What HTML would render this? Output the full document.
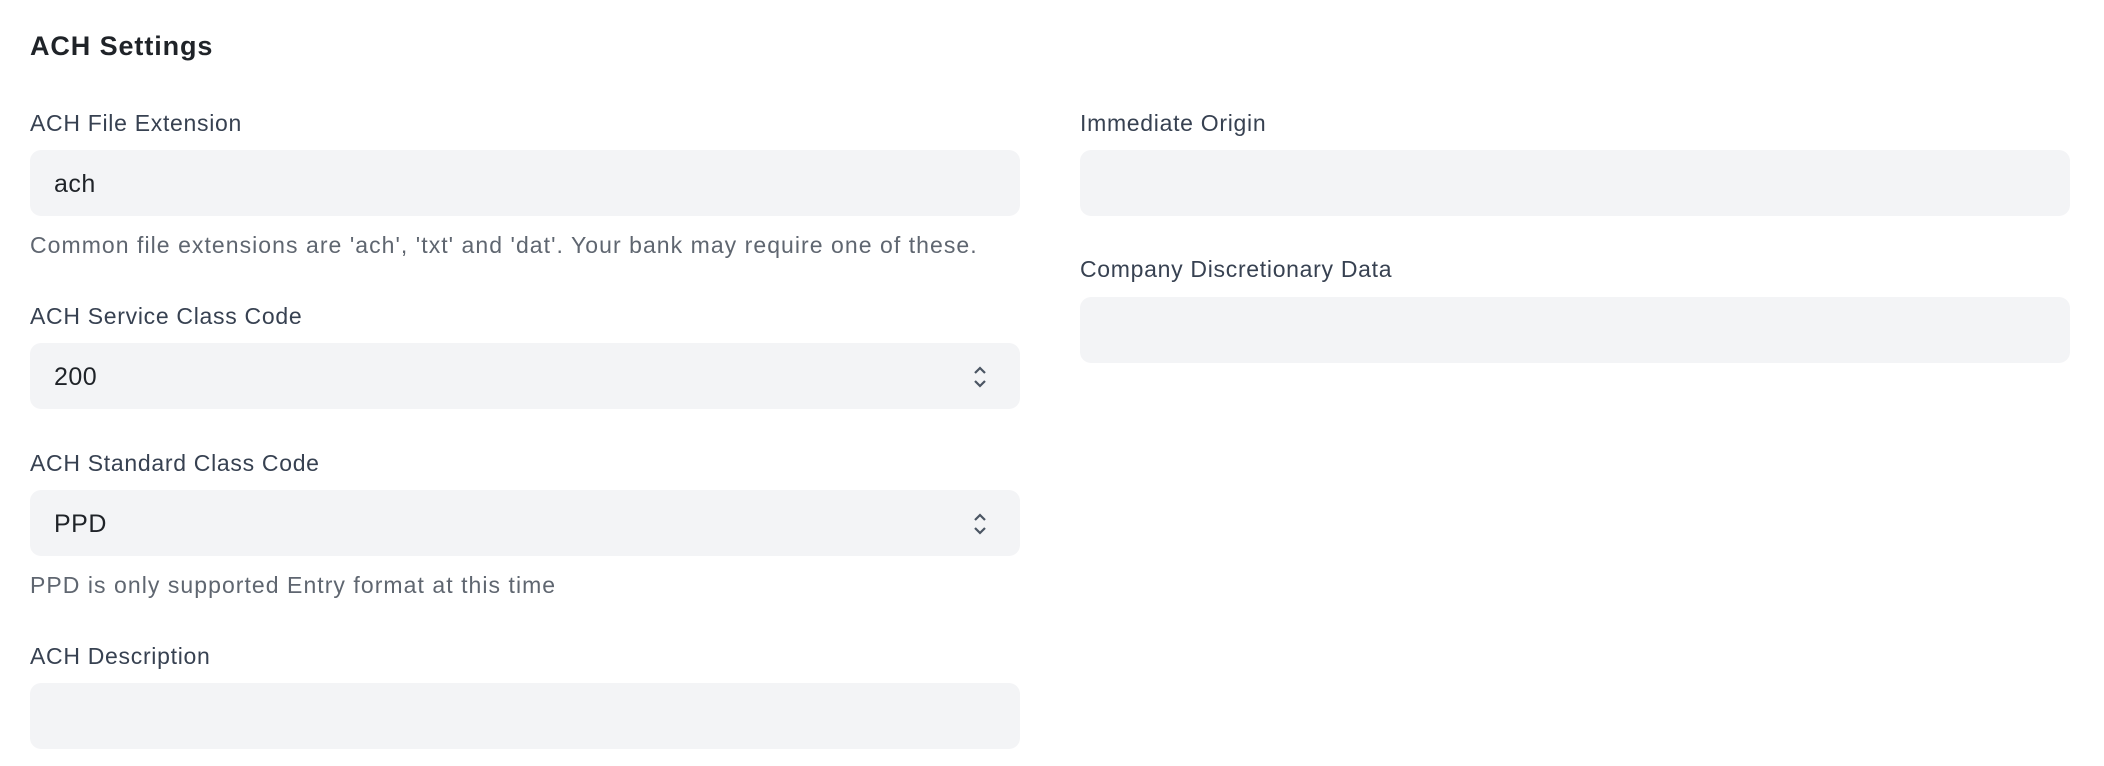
<!DOCTYPE html>
<html><head><meta charset="utf-8"><style>
html,body{margin:0;padding:0;background:#fff;width:2104px;height:766px;overflow:hidden;font-family:"Liberation Sans",sans-serif;}
.a{position:absolute;white-space:nowrap;}
.t{left:30px;top:30px;font-size:27px;font-weight:bold;color:#1f2328;line-height:32px;letter-spacing:0.9px;}
.l{font-size:23px;color:#374151;line-height:28px;letter-spacing:0.7px;}
.h{font-size:23px;color:#5f6670;line-height:28px;letter-spacing:1.05px;}
.i{background:#f3f4f6;border-radius:11px;height:66px;}
.v{font-size:25px;color:#1f2328;line-height:68px;padding-left:24px;letter-spacing:0.5px;}
.c{position:absolute;right:32px;top:22px;}
</style></head><body>
<div class="a t">ACH Settings</div>

<div class="a l" style="left:30px;top:109px">ACH File Extension</div>
<div class="a i" style="left:30px;top:150px;width:990px"><div class="v">ach</div></div>
<div class="a h" style="left:30px;top:231px">Common file extensions are 'ach', 'txt' and 'dat'. Your bank may require one of these.</div>

<div class="a l" style="left:30px;top:302px">ACH Service Class Code</div>
<div class="a i" style="left:30px;top:343px;width:990px"><div class="v">200</div>
<svg class="c" width="16" height="24" viewBox="0 0 16 24"><path d="M3 8 L8 3 L13 8 M3 16 L8 21 L13 16" fill="none" stroke="#4b5563" stroke-width="2.2"/></svg></div>

<div class="a l" style="left:30px;top:449px">ACH Standard Class Code</div>
<div class="a i" style="left:30px;top:490px;width:990px"><div class="v">PPD</div>
<svg class="c" width="16" height="24" viewBox="0 0 16 24"><path d="M3 8 L8 3 L13 8 M3 16 L8 21 L13 16" fill="none" stroke="#4b5563" stroke-width="2.2"/></svg></div>
<div class="a h" style="left:30px;top:571px">PPD is only supported Entry format at this time</div>

<div class="a l" style="left:30px;top:642px">ACH Description</div>
<div class="a i" style="left:30px;top:683px;width:990px"></div>

<div class="a l" style="left:1080px;top:109px">Immediate Origin</div>
<div class="a i" style="left:1080px;top:150px;width:990px"></div>
<div class="a l" style="left:1080px;top:255px">Company Discretionary Data</div>
<div class="a i" style="left:1080px;top:297px;width:990px"></div>
</body></html>
